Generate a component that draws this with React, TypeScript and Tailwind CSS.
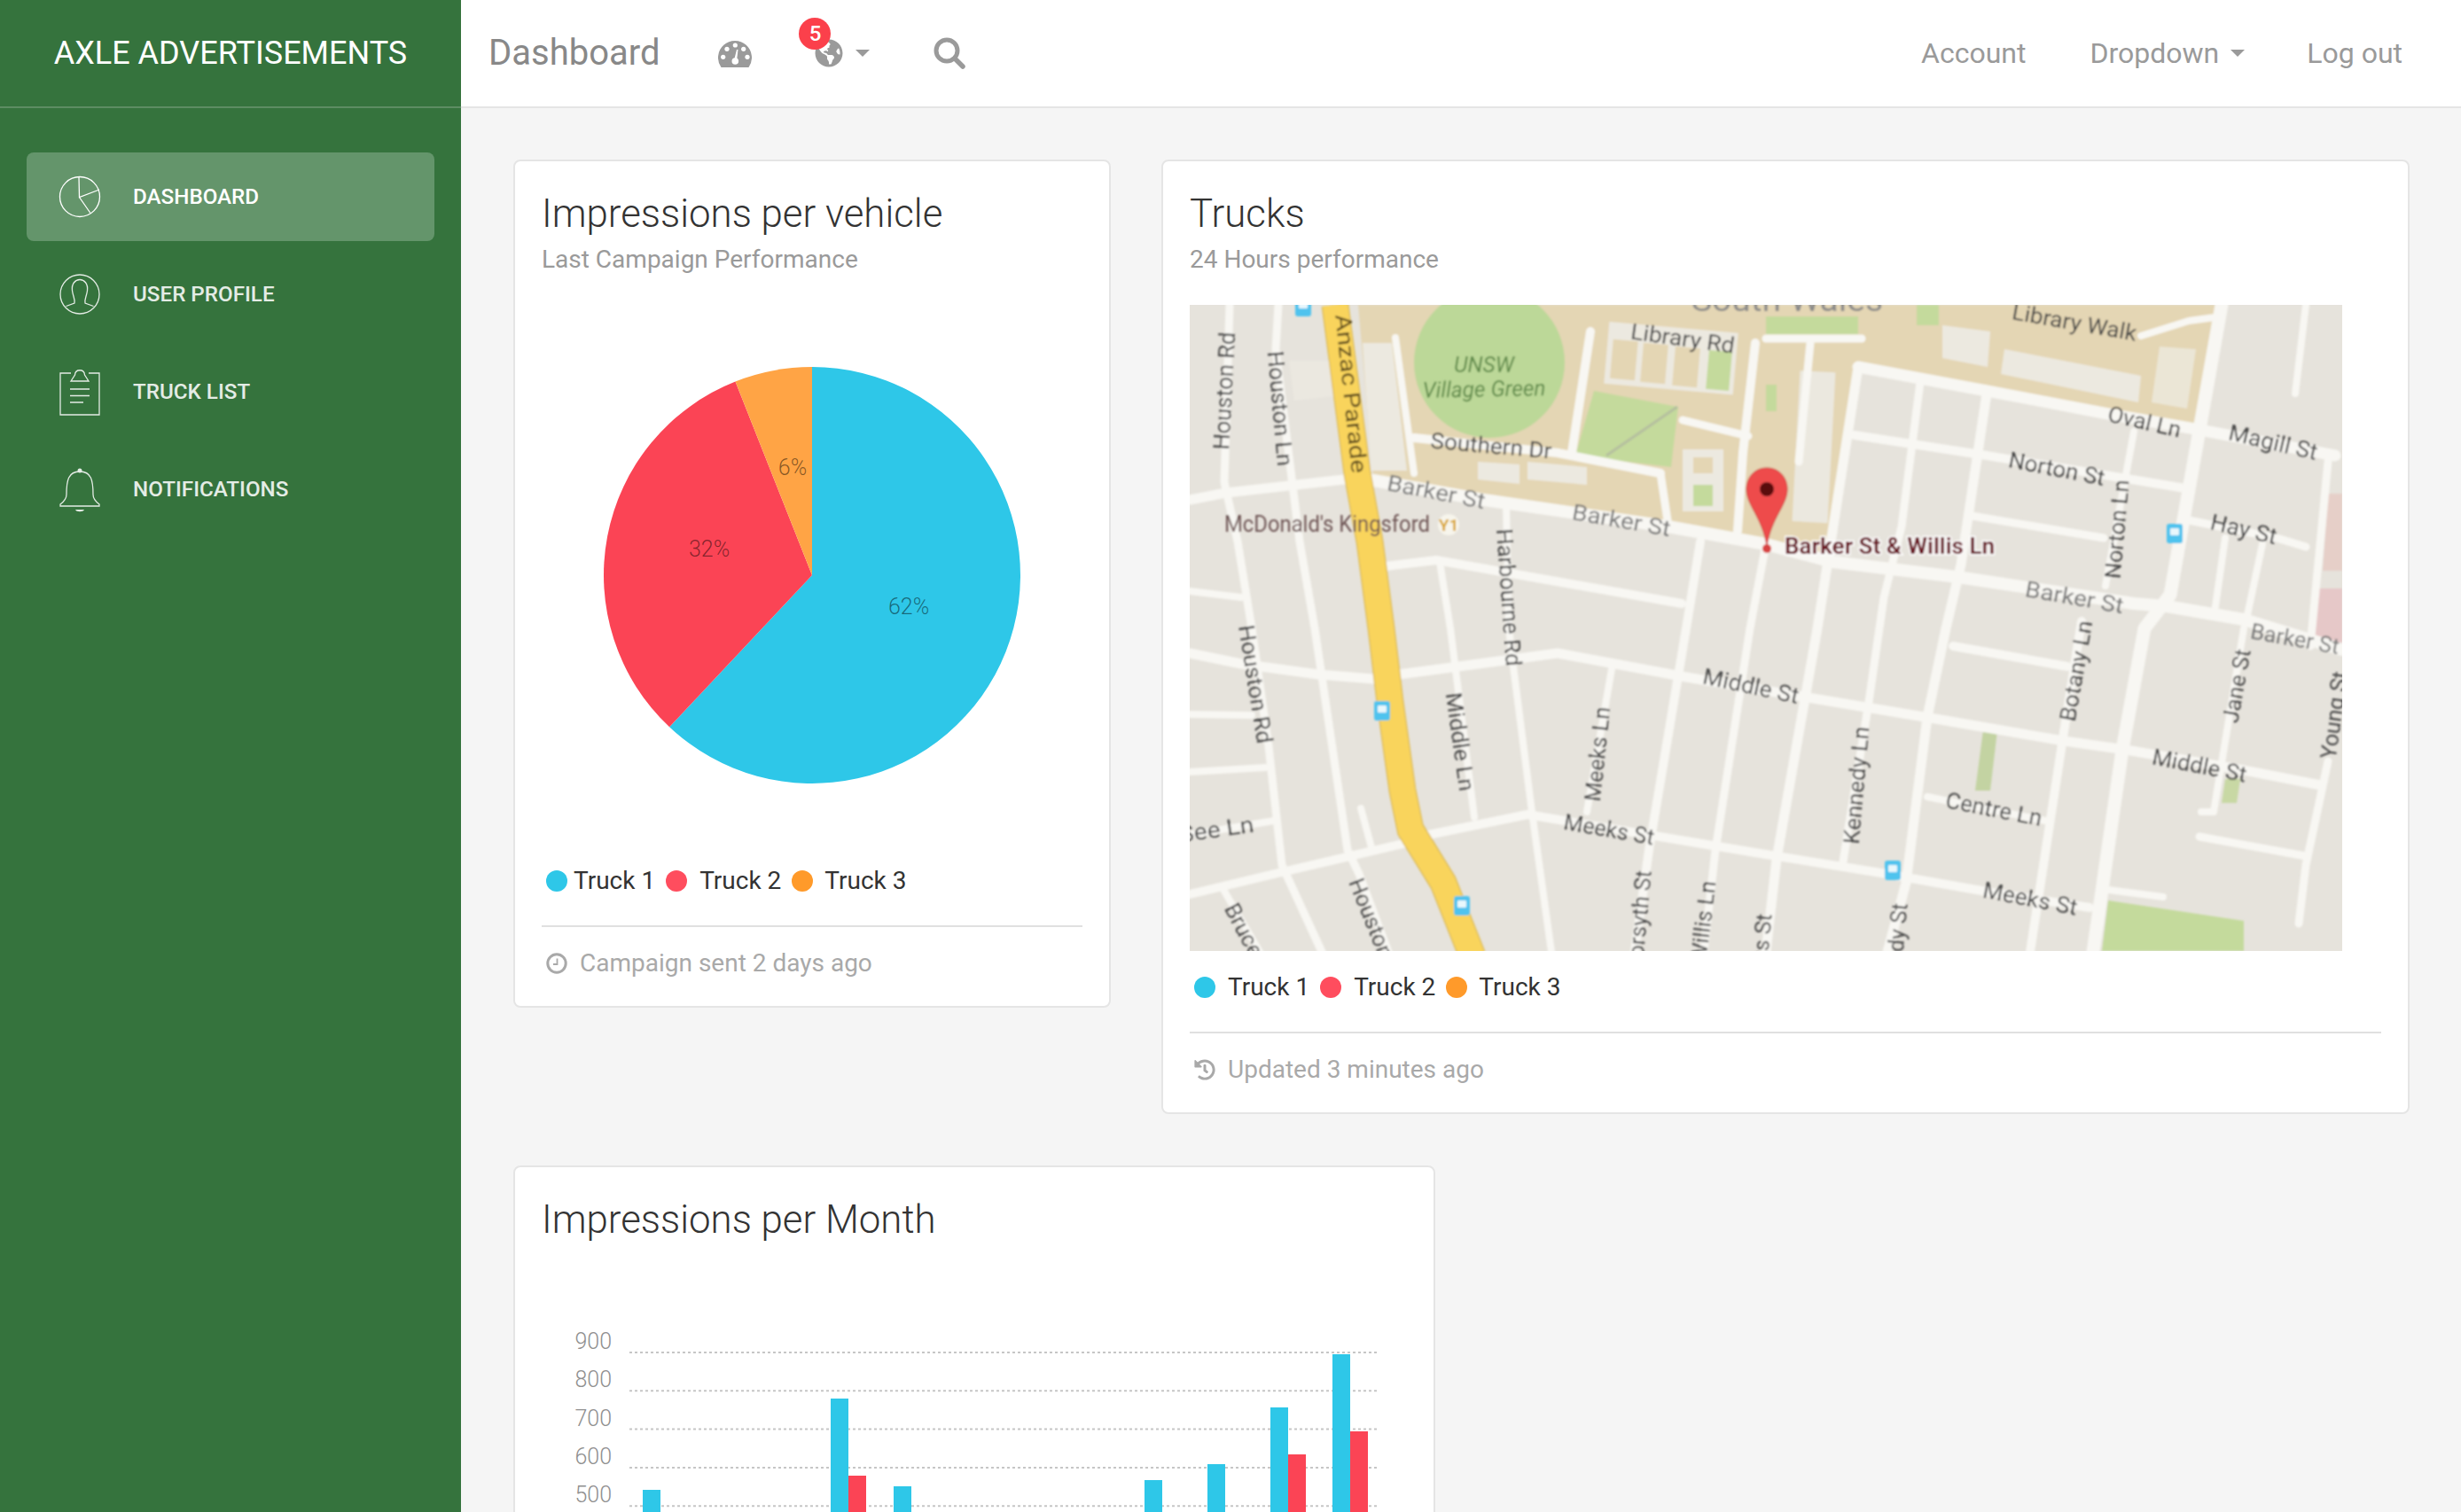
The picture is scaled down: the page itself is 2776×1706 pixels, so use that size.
import React from 'react';
import { FaGlobeAmericas, FaHistory } from 'react-icons/fa';

const BLUE = '#2ec7e8';
const RED = '#fb4455';
const ORANGE = '#ffa445';

const PieIcon = () => (
  <svg viewBox="-23 -23 46 46" className="h-[46px] w-[46px] overflow-visible" fill="none" stroke="currentColor" strokeWidth="1.3">
    <circle cx="0" cy="0" r="22.5" />
    <path d="M-1 -22.5 L-0.5 0.5 L22 -8 M-0.5 0.5 L12 18.5" />
  </svg>
);

const UserIcon = () => (
  <svg viewBox="-23 -23 46 46" className="h-[46px] w-[46px] overflow-visible" fill="none" stroke="currentColor" strokeWidth="1.3">
    <circle cx="0" cy="0" r="22" />
    <path d="M-15.5 13.5 L-6 10 C-5 6 -7.5 3 -8.5 -4 C-9.5 -12 -5 -16.5 0 -16.5 C5 -16.5 9.5 -12 8.5 -4 C7.5 3 5 6 6 10 L15.5 13.5" />
  </svg>
);

const NoteIcon = () => (
  <svg viewBox="-23 -23 46 46" className="h-[46px] w-[46px] overflow-visible" fill="none" stroke="currentColor" strokeWidth="1.3">
    <path d="M-10 -21 H-22 V26 H22 V-21 H10" />
    <path d="M-10 -12 L-5.5 -19 C-5 -26 5 -26 5.5 -19 L10 -12 Z" />
    <path d="M-11 -3 H11 M-11 4.5 H11 M-11 12 H4" />
  </svg>
);

const BellIcon = () => (
  <svg viewBox="-23 -23 46 46" className="h-[46px] w-[46px] overflow-visible" fill="none" stroke="currentColor" strokeWidth="1.3">
    <path d="M-15 6 C-15 -10 -13 -20 0 -20 C13 -20 15 -10 15 6 C15 11 18 14 22 17 V19 H-22 V17 C-18 14 -15 11 -15 6 Z" />
    <circle cx="0" cy="-21" r="2.5" fill="currentColor" stroke="none" />
    <path d="M-5 23 H5 C4 26 -4 26 -5 23 Z" fill="currentColor" stroke="none" />
  </svg>
);

const GaugeIcon = () => (
  <svg viewBox="0 0 38 30" className="h-[30px] w-[38px]">
    <path d="M3.5 30 A19 19 0 1 1 34.5 30 Z" fill="#9a9a9a" />
    {[[5.7, 18.3], [10, 9.3], [19.3, 5], [28.7, 9.3], [33, 18.3]].map(([x, y]) => (
      <circle key={x} cx={x} cy={y} r="2.6" fill="#fff" />
    ))}
    <circle cx="19.3" cy="23" r="3.8" fill="#fff" />
    <path d="M18 22 L21 10 L22.5 10 L21 23 Z" fill="#fff" />
  </svg>
);

const SearchIcon = () => (
  <svg viewBox="0 0 36 36" className="h-9 w-9" fill="none" stroke="#9a9a9a">
    <circle cx="15" cy="15" r="12" strokeWidth="5" />
    <path d="M24 24 L33 33" strokeWidth="5.5" strokeLinecap="round" />
  </svg>
);

const ClockIcon = () => (
  <svg viewBox="0 0 24 24" className="h-6 w-6" fill="none" stroke="#a9a9a9">
    <circle cx="12" cy="12" r="10.2" strokeWidth="3" />
    <path d="M12.5 6.5 V13 H8" strokeWidth="1.8" />
  </svg>
);

const Caret = () => (
  <span className="h-0 w-0 border-x-[8px] border-t-[8px] border-x-transparent border-t-[#9a9a9a]" />
);

const navItems = [
  { label: 'DASHBOARD', icon: <PieIcon />, active: true },
  { label: 'USER PROFILE', icon: <UserIcon /> },
  { label: 'TRUCK LIST', icon: <NoteIcon /> },
  { label: 'NOTIFICATIONS', icon: <BellIcon /> },
];

const Sidebar = () => (
  <aside className="h-full w-[520px] shrink-0 bg-[#35733d] text-white">
    <div className="flex h-[122px] items-center justify-center border-b-2 border-[#5d8d63] pb-[1px] text-[36px] leading-none">
      AXLE ADVERTISEMENTS
    </div>
    <nav className="flex flex-col gap-[10px] px-[30px] pt-[50px]">
      {navItems.map(item => (
        <div
          key={item.label}
          className={`flex h-[100px] items-center gap-[37px] rounded-lg pl-[37px] ${
            item.active ? 'bg-[#64956b] text-white' : 'text-[#e4ece5]'
          }`}
        >
          {item.icon}
          <span className="mt-[1px] text-[24.2px] font-medium leading-none">{item.label}</span>
        </div>
      ))}
    </nav>
  </aside>
);

const Topbar = () => (
  <header className="flex h-[122px] items-center justify-between border-b-2 border-[#e5e5e5] bg-white pb-[1px] text-[#9a9a9a]">
    <div className="flex items-center">
      <span className="ml-[31px] text-[40px] leading-none text-[#888]">Dashboard</span>
      <span className="ml-[66px] mt-[2px]">
        <GaugeIcon />
      </span>
      <span className="relative ml-[71px] flex items-center gap-[14px]">
        <FaGlobeAmericas className="h-8 w-8 text-[#9a9a9a]" />
        <Caret />
        <span className="absolute -left-[18px] -top-[24px] flex h-9 w-9 items-center justify-center rounded-full bg-[#fb404b] text-[24px] font-medium text-white">
          5
        </span>
      </span>
      <span className="ml-[72px]">
        <SearchIcon />
      </span>
    </div>
    <div className="flex items-center pr-[66px] text-[32px] leading-none">
      <span>Account</span>
      <span className="ml-[72px] flex items-center gap-[13px]">
        Dropdown
        <Caret />
      </span>
      <span className="ml-[70px]">Log out</span>
    </div>
  </header>
);

const Card = ({ className, children }: { className: string; children: React.ReactNode }) => (
  <section className={`rounded-lg border-2 border-[#e5e5e5] bg-white px-[30px] ${className}`}>{children}</section>
);

const CardTitle = ({ title, sub }: { title: string; sub?: string }) => (
  <div className="pt-[30px]">
    <h4 className="h-[58px] text-[43.8px] font-light leading-[58px] text-[#333]">{title}</h4>
    {sub && <p className="mt-[3px] h-[39px] text-[28px] leading-[40px] text-[#9a9a9a]">{sub}</p>}
  </div>
);

const Legend = ({ gaps }: { gaps: [number, number][] }) => (
  <div className="flex h-[40px] items-center pl-[5px] text-[28px] leading-none text-[#333]">
    {['Truck 1', 'Truck 2', 'Truck 3'].map((name, i) => (
      <React.Fragment key={name}>
        <span
          className={`h-6 w-6 rounded-full ${i === 0 ? 'bg-[#2ec7e8]' : i === 1 ? 'bg-[#ff4d5e]' : 'bg-[#ff9a2a]'}`}
          style={{ marginLeft: gaps[i][0] }}
        />
        <span style={{ marginLeft: gaps[i][1] }}>{name}</span>
      </React.Fragment>
    ))}
  </div>
);

const CardFooter = ({ icon, text, gap }: { icon: React.ReactNode; text: string; gap: string }) => (
  <div className="mt-[30px] border-t-2 border-[#e0e0e0] pb-[28px] pt-[21px]">
    <div className={`flex h-[40px] items-center pl-[5px] text-[28px] leading-none text-[#a9a9a9] ${gap}`}>
      {icon}
      <span>{text}</span>
    </div>
  </div>
);

// slice path for a pie, fractions run clockwise from 12 o'clock
const slice = (from: number, to: number, r: number, cx: number, cy: number) => {
  const pt = (f: number) => {
    const a = f * 2 * Math.PI;
    return `${cx + r * Math.sin(a)} ${cy - r * Math.cos(a)}`;
  };
  return `M${cx} ${cy} L${pt(from)} A${r} ${r} 0 ${to - from > 0.5 ? 1 : 0} 1 ${pt(to)} Z`;
};

const PieChart = () => (
  <svg viewBox="0 0 610 662" className="h-[662px] w-full">
    <path d={slice(0, 0.62, 235, 305, 337)} fill={BLUE} />
    <path d={slice(0.62, 0.94, 235, 305, 337)} fill={RED} />
    <path d={slice(0.94, 1, 235, 305, 337)} fill={ORANGE} />
    <g fontSize="25" fill="#000" fillOpacity="0.48" textAnchor="middle" fontWeight="300">
      <text x="414" y="381">62%</text>
      <text x="189" y="316">32%</text>
      <text x="283" y="224">6%</text>
    </g>
  </svg>
);

const yLabels = ['900', '800', '700', '600', '500'];
const bars = [
  { x: 114, top: 276 },
  { x: 326, top: 173, red: 260 },
  { x: 397, top: 272 },
  { x: 680, top: 265 },
  { x: 751, top: 247 },
  { x: 822, top: 183, red: 236 },
  { x: 892, top: 123, red: 210 },
];

const BarChart = () => (
  <svg viewBox="0 0 976 400" className="h-[400px] w-full">
    {yLabels.map((v, i) => {
      const y = 121 + i * 43.3;
      return (
        <g key={v}>
          <text x="79" y={y - 4} textAnchor="end" fontSize="25" fontWeight="300" fill="#8f8f8f">{v}</text>
          <line x1="99" x2="943" y1={y} y2={y} stroke="#c6c6c6" strokeWidth="2" strokeDasharray="3 3" />
        </g>
      );
    })}
    {bars.map(b => (
      <g key={b.x}>
        <rect x={b.x} y={b.top} width="20" height={400 - b.top} fill={BLUE} />
        {b.red && <rect x={b.x + 20} y={b.red} width="20" height={400 - b.red} fill={RED} />}
      </g>
    ))}
  </svg>
);

type Road = [number, string];

// street grid, in map pixels
const roads: Road[] = [
  [11, '0,220 41,212 174,197 207,198'],
  [14, '207,198 332,220 539,250 650,270 725,290 866,307 1065,337 1102,340 1189,355 1300,389'],
  [10, '220,295 278,288 555,337'],
  [8, '0,323 58,330'],
  [10, '253,150 415,167 531,190'],
  [8, '232,37 253,190'],
  [10, '452,30 431,167'],
  [10, '638,43 624,167 618,255'],
  [9, '45,0 39,200 54,267 70,365 89,498 104,632 149,730'],
  [9, '100,0 97,50 114,187 124,267 141,365 178,615 191,642 224,730'],
  [8, '357,227 360,365 365,408 386,572 408,730'],
  [8, '282,290 294,365 321,578'],
  [10, '576,267 560,365 518,615 502,730'],
  [9, '650,270 632,365 593,615 580,730'],
  [11, '0,393 58,405 145,417 207,422 236,417 415,393 560,420 691,442 841,467 986,492 1056,502 1189,525 1276,542'],
  [8, '0,462 70,463'],
  [8, '0,527 85,522'],
  [8, '0,598 95,582'],
  [10, '0,665 104,640 245,607 269,598 381,575 518,598 650,620 774,640 899,662 1015,680'],
  [8, '1036,660 1098,668'],
  [8, '477,405 448,572'],
  [8, '37,658 79,730'],
  [8, '193,568 205,612'],
  [11, '754,70 708,365 662,625 650,730'],
  [13, '754,70 899,97 1036,123 1134,140 1292,170'],
  [9, '824,87 803,250 783,330 766,448 737,628'],
  [11, '899,100 870,293 853,365 832,465 808,652 787,730'],
  [10, '750,147 899,170 1123,207'],
  [9, '882,238 1031,263'],
  [8, '1065,143 1033,317'],
  [15, '1164,0 1106,327 1077,365 1052,502 1019,730'],
  [10, '1006,357 986,482 948,730'],
  [9, '1127,243 1226,263 1259,273'],
  [8, '1168,263 1156,347'],
  [8, '1210,270 1193,350'],
  [9, '1284,177 1264,385'],
  [9, '1284,515 1259,632 1251,698'],
  [8, '1259,0 1247,100'],
  [8, '1189,365 1155,572 1141,572'],
  [10, '861,385 990,408'],
  [8, '832,555 965,582'],
  [9, '1139,600 1259,622'],
  [8, '1073,35 1127,18 1164,13'],
  [9, '700,43 687,177'],
  [9, '650,38 758,38'],
  [9, '531,190 540,250'],
  [9, '556,130 630,148'],
];

type MapLabel = {
  t: string;
  x: number;
  y: number;
  r?: number;
  len?: number;
  size?: number;
  fill?: string;
  anchor?: 'start' | 'middle' | 'end';
  italic?: boolean;
};

const labels: MapLabel[] = [
  { t: 'Houston Rd', x: 39, y: 97, r: -87, len: 133 },
  { t: 'Houston Ln', x: 102, y: 117, r: 85, len: 130 },
  { t: 'Anzac Parade', x: 182, y: 100, r: 84, len: 180, fill: '#5c4a1e' },
  { t: 'UNSW', x: 332, y: 67, len: 68, italic: true, fill: '#5f8a4a' },
  { t: 'Village Green', x: 332, y: 95, r: -1, len: 139, italic: true, fill: '#5f8a4a' },
  { t: 'Southern Dr', x: 340, y: 159, r: 5, len: 137, fill: '#444' },
  { t: 'Library Rd', x: 556, y: 38, r: 8, len: 118, fill: '#444' },
  { t: 'Barker St', x: 278, y: 211, r: 11, len: 112, fill: '#777' },
  { t: 'Barker St', x: 487, y: 243, r: 10, len: 112, fill: '#777' },
  { t: "McDonald's Kingsford", x: 155, y: 247, len: 232, fill: '#6e5555' },
  { t: 'Harbourne Rd', x: 360, y: 330, r: 86, len: 155 },
  { t: 'Middle Ln', x: 305, y: 493, r: 82, len: 112 },
  { t: 'Houston Rd', x: 74, y: 428, r: 81, len: 135 },
  { t: 'Meeks Ln', x: 460, y: 507, r: -84, len: 107 },
  { t: 'See Ln', x: 30, y: 592, r: -8, len: 85 },
  { t: 'Houston', x: 187, y: 648, r: 68, anchor: 'start' },
  { t: 'Bruce', x: 46, y: 677, r: 62, anchor: 'start' },
  { t: 'Meeks St', x: 473, y: 592, r: 10, len: 103 },
  { t: 'Forsyth St', x: 512, y: 638, r: -85, anchor: 'end' },
  { t: 'Willis Ln', x: 585, y: 650, r: -83, anchor: 'end' },
  { t: 'Middle St', x: 633, y: 430, r: 12, len: 110 },
  { t: 'Banks St', x: 648, y: 687, r: -85, anchor: 'end' },
  { t: 'Kennedy Ln', x: 752, y: 542, r: -85, len: 133 },
  { t: 'Kennedy St', x: 801, y: 675, r: -85, anchor: 'end' },
  { t: 'Centre Ln', x: 907, y: 569, r: 11, len: 110 },
  { t: 'Meeks St', x: 948, y: 670, r: 11, len: 108 },
  { t: 'Botany Ln', x: 1000, y: 413, r: -80, len: 115 },
  { t: 'Middle St', x: 1139, y: 520, r: 11, len: 108 },
  { t: 'Jane St', x: 1181, y: 430, r: -80, len: 84 },
  { t: 'Young St', x: 1284, y: 512, r: -82, anchor: 'start' },
  { t: 'Barker St', x: 1197, y: 368, r: 10, anchor: 'start', fill: '#777' },
  { t: 'Barker St', x: 998, y: 330, r: 10, len: 112, fill: '#777' },
  { t: 'Norton St', x: 978, y: 185, r: 11, len: 110, fill: '#444' },
  { t: 'Norton Ln', x: 1046, y: 253, r: -85, len: 112, fill: '#444' },
  { t: 'Oval Ln', x: 1077, y: 132, r: 13, len: 84, fill: '#444' },
  { t: 'Magill St', x: 1222, y: 155, r: 13, len: 102, fill: '#444' },
  { t: 'Hay St', x: 1189, y: 253, r: 13, len: 76, fill: '#444' },
  { t: 'Library Walk', x: 998, y: 20, r: 10, len: 142, fill: '#444' },
];

const busStops = [[128, 2], [217, 458], [307, 678], [1111, 258], [793, 638]];

const campusGreen = '#c4da9c';
const campusTan = '#e4d6b4';

const MapPicture = () => (
  <svg viewBox="0 0 1300 729" className="block h-[729px] w-[1300px]">
    <defs>
      <filter id="soft" x="-2%" y="-2%" width="104%" height="104%">
        <feGaussianBlur stdDeviation="0.9" />
      </filter>
    </defs>
    <rect width="1300" height="729" fill="#e6e3dc" />
    <g filter="url(#soft)">
      <polygon points="190,0 1170,0 1140,140 754,70 720,290 650,270 250,205 207,195" fill={campusTan} />
      <polygon points="1284,213 1300,213 1300,300 1278,300" fill="#e6cfc8" />
      <polygon points="1268,320 1300,320 1300,390 1262,385" fill="#e6c8c8" />
      {/* pale campus buildings */}
      <polygon points="195,43 228,43 245,187 205,187" fill="#ecE9e0" />
      <polygon points="112,63 158,63 162,103 118,108" fill="#ebe8e0" />
      <polygon points="381,177 448,183 448,203 381,197" fill="#ece9e0" />
      <polygon points="325,177 372,180 372,202 325,197" fill="#ece9e0" />
      <polygon points="919,50 1073,80 1070,110 915,78" fill="#ece9e0" />
      <polygon points="849,23 903,30 900,70 849,60" fill="#ece9e0" />
      <polygon points="1094,47 1135,50 1125,117 1085,110" fill="#ebe6d6" />
      <rect x="684" y="75" width="40" height="170" fill="#ebe8df" transform="rotate(3 700 160)" />
      <rect x="470" y="25" width="146" height="70" fill="#ece9e0" transform="rotate(5 540 60)" />
      <rect x="476" y="40" width="28" height="44" fill={campusTan} transform="rotate(5 490 60)" />
      <rect x="510" y="44" width="28" height="44" fill={campusTan} transform="rotate(5 524 66)" />
      <rect x="546" y="48" width="28" height="44" fill={campusTan} transform="rotate(5 560 70)" />
      <rect x="584" y="52" width="26" height="44" fill={campusGreen} transform="rotate(5 597 74)" />
      <rect x="556" y="163" width="46" height="70" fill="#ece9e0" />
      <rect x="568" y="203" width="22" height="24" fill={campusGreen} />
      <rect x="568" y="172" width="22" height="18" fill={campusTan} />
      {/* parks */}
      <circle cx="338" cy="65" r="85" fill="#bcd898" />
      <polygon points="456,97 551,115 543,183 435,170" fill={campusGreen} />
      <line x1="470" y1="170" x2="550" y2="115" stroke="#b5bf9f" strokeWidth="3" />
      <rect x="820" y="0" width="25" height="23" fill={campusGreen} />
      <rect x="650" y="13" width="104" height="20" fill={campusGreen} />
      <rect x="650" y="90" width="12" height="30" fill={campusGreen} />
      <polygon points="895,480 911,480 903,548 886,548" fill="#c3d3a2" />
      <polygon points="1168,535 1185,535 1181,562 1164,562" fill="#c8d8a4" />
      <polygon points="1036,672 1189,695 1189,729 1029,729" fill={campusGreen} />
      {roads.map(([w, pts]) => (
        <polyline key={pts} points={pts} fill="none" stroke="#f8f7f3" strokeWidth={w} strokeLinejoin="round" strokeLinecap="round" />
      ))}
      <polyline
        points="164,0 189,190 203,267 216,365 226,448 240,548 249,592 286,652 319,735"
        fill="none"
        stroke="#dfbf62"
        strokeWidth="31"
      />
      <polyline
        points="164,0 189,190 203,267 216,365 226,448 240,548 249,592 286,652 319,735"
        fill="none"
        stroke="#f9d45c"
        strokeWidth="28"
      />
      {busStops.map(([x, y]) => (
        <g key={x}>
          <rect x={x - 9} y={y - 11} width="18" height="22" rx="3" fill="#4fc3ee" />
          <rect x={x - 5} y={y - 6} width="10" height="8" rx="1" fill="#e8f7fc" />
        </g>
      ))}
      <circle cx="292" cy="248" r="12" fill="#f7f5ec" />
      <text x="292" y="255" fontSize="19" fontWeight="700" fill="#d9a520" textAnchor="middle">Y1</text>
      <text x="674" y="7" fontSize="36" fill="#8a8a8a" textAnchor="middle" textLength="216" lengthAdjust="spacingAndGlyphs">South Wales</text>
      {labels.map(l => (
        <text
          key={`${l.t}${l.x}`}
          transform={`translate(${l.x} ${l.y}) rotate(${l.r ?? 0})`}
          textAnchor={l.anchor ?? 'middle'}
          dominantBaseline="central"
          fontSize={l.size ?? 25}
          fontStyle={l.italic ? 'italic' : 'normal'}
          fill={l.fill ?? '#484848'}
          textLength={l.len}
          lengthAdjust="spacingAndGlyphs"
        >
          {l.t}
        </text>
      ))}
      <path d="M651 184 C636 184 628 196 628 208 C628 226 646 240 651 272 C656 240 674 226 674 208 C674 196 666 184 651 184 Z" fill="#ee4c4c" stroke="#c93a3a" />
      <circle cx="651" cy="208" r="8" fill="#5a0d0d" />
      <circle cx="651" cy="275" r="5" fill="#d84343" />
      <text
        x="671"
        y="281"
        fontSize="25"
        fontWeight="700"
        fill="#6b1420"
        stroke="#fff"
        strokeWidth="3"
        paintOrder="stroke"
        textLength="237"
        lengthAdjust="spacingAndGlyphs"
      >
        Barker St &amp; Willis Ln
      </text>
    </g>
  </svg>
);

export default function App() {
  return (
    <div className="flex h-screen overflow-hidden bg-[#f5f5f5] font-[Roboto,sans-serif]">
      <Sidebar />
      <main className="min-w-0 flex-1">
        <Topbar />
        <div className="px-[59px] pt-[58px]">
          <div className="flex items-start gap-[57px]">
            <Card className="w-[674px] shrink-0">
              <CardTitle title="Impressions per vehicle" sub="Last Campaign Performance" />
              <PieChart />
              <Legend gaps={[[0, 7], [12, 14], [12, 13]]} />
              <CardFooter icon={<ClockIcon />} text="Campaign sent 2 days ago" gap="gap-[14px]" />
            </Card>
            <Card className="w-[1408px] shrink-0">
              <CardTitle title="Trucks" sub="24 Hours performance" />
              <div className="mt-[32px]">
                <MapPicture />
              </div>
              <div className="mt-[21px]">
                <Legend gaps={[[0, 14], [12, 14], [12, 13]]} />
              </div>
              <CardFooter
                icon={<FaHistory className="h-6 w-6 text-[#a9a9a9]" />}
                text="Updated 3 minutes ago"
                gap="gap-[14px]"
              />
            </Card>
          </div>
          <Card className="mt-[58px] w-[1040px]">
            <CardTitle title="Impressions per Month" />
            <BarChart />
          </Card>
        </div>
      </main>
    </div>
  );
}
